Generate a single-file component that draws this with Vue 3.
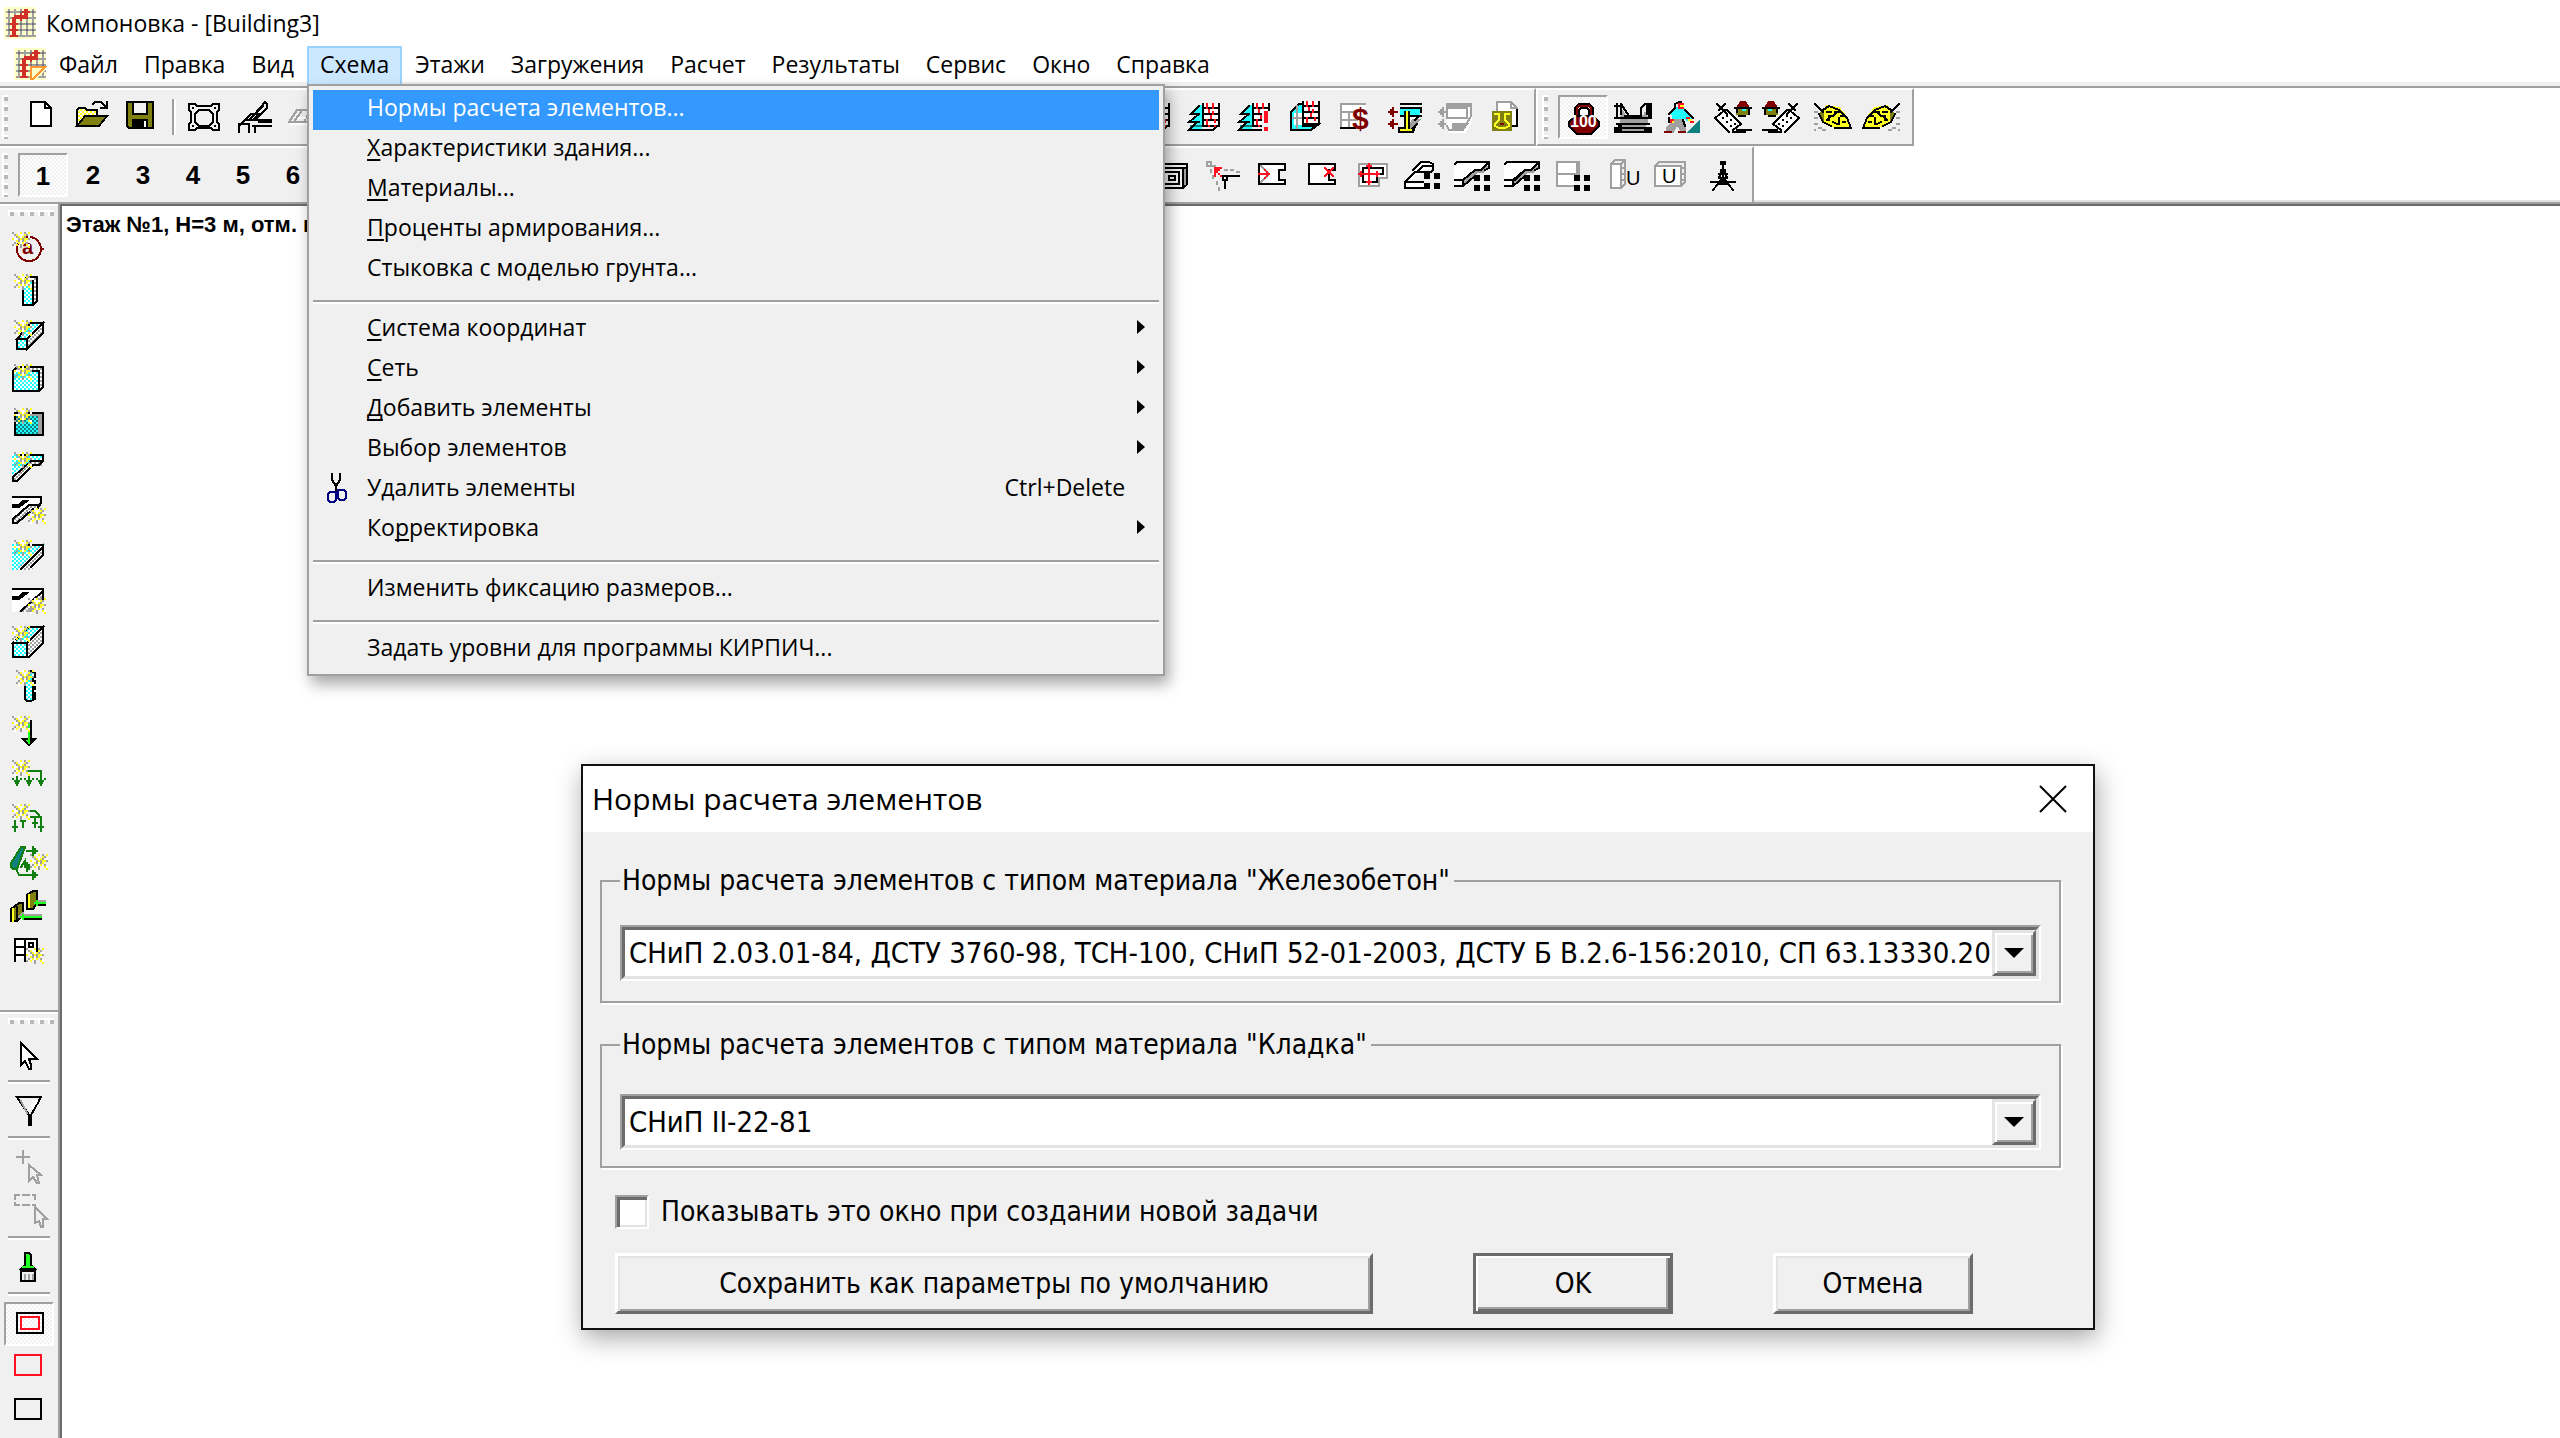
<script setup>
import { h } from 'vue'

const palette = {
  k: '#000000', w: '#ffffff', g: '#a0a0a0', r: '#ff1020', R: '#800000', c: '#20ffff',
  t: '#108080', y: '#ffff20', o: '#808010', G: '#108010', l: '#20ff20', n: '#000080', f: '#f0f0f0',
  p: '#ffffc8', q: '#d03028', d: '#707078', a: '#ff9830',
  C: 'url(#chk-cyan)', A: 'url(#chk-gray)', T: 'url(#chk-teal)', Y: 'url(#chk-yellow)',
}

const spark = [
  'g..wy.g.y', '.gy.w.yg.', '..gywyg.w', 'ywwgygyyg', '..ygwgy..', '.g.ywy.g.', 'g.y.g..yw', '.w..g...y',
]

// Pixel rows -> shapes, one square per letter.
const dots = (rows, x, y) => {
  const by = {}
  rows.forEach((row, j) => [...row].forEach((ch, i) => {
    if (ch !== '.') by[ch] = (by[ch] || '') + `M${x + i},${y + j}h0`
  }))
  return Object.entries(by).map(([ch, d]) => [d, ch, ''])
}
const star = (x, y) => dots(spark, x, y)
const four = (x, y) => [[`M${x},${y}h2v2h-2z M${x + 5},${y}h2v2h-2z M${x},${y + 5}h2v2h-2z M${x + 5},${y + 5}h2v2h-2z`, 'k', 'k']]
const label = (text, x, y, size, color, weight = 700) => [{ text, x, y, size, color, weight }]

const grid = [
  ['M0,0H15V15H0z', 'p', 'p'],
  ['M2,1V14M5,1V14M8,1V14M11,1V14M14,1V14M1,2H15M1,5H15M1,8H15M1,11H15M1,14H15', 'g', ''],
  ['M2,2h0M8,2h0M14,2h0M2,8h0M8,8h0M11,8h0M14,8h0M2,11h0M8,11h0M11,11h0M14,11h0', 'd', ''],
  ['M4,5h1v9h-1zM5,4h6v1h-6zM10,1h1v4h-1zM3,8h3M3,11h3M9,2h3M8,3v3M3,14h3', 'q', 'q'],
]
const tower = [
  ['M6,2L2,6H6L1,10H6L2,13H7V2z', 'c', 'c'],
  ['M2,12H13', 't', ''],
  ['M6,2L2,6H6M6,6L1,10H6M5,10L1,14H13L16,11', 'k', ''],
  ['M9,1h6v10h-6z', 'w', 'w'],
  ['M8,1V12M16,1V12M8,3H16M8,6H16M8,9H16M8,12H16', 'k', ''],
  ['M10,1V3M13,1V3M11,4V5M13,5V6M12,7V8M10,9V11M14,9V10M11,12h0M14,12h0', 'r', ''],
]
const slab = (y) => [
  [`M0,${y}H16L12,${y + 4}H9L2,${y + 11}H-1V${y + 1}z`, 'w', 'w'],
  [`M16,${y + 2}L13,${y + 5}H10L4,${y + 11}V${y + 9}L9,${y + 4}H13z`, 'g', 'g'],
  [`M-1,${y + 1}L0,${y}H16V${y + 3}L14,${y + 4}M15,${y + 1}L12,${y + 4}H9L3,${y + 9}H-1M-1,${y + 12}H3L9,${y + 7}M3,${y + 9}V${y + 12}`, 'k', ''],
]
const brick = [
  ['M0,8L5,5L11,10L6,14z', 'w', 'w'],
  ['M-1,8L4,4M-1,8L6,15M12,11L8,14M5,4L12,11M0,1L5,6M4,1L1,4', 'k', ''],
  ['M3,8h0M5,7h0M5,10h0M7,9h0M7,12h0M9,11h0', 'k', ''],
  ['M10,3L12,0H14L16,3z', 'R', 'R'],
  ['M10,4H15V6H10z', 'o', 'o'],
  ['M9,3H17M10,4V5M16,4V6M14,7H11M8,15H14M10,14H17', 'k', ''],
  ['M13,4h1', 'c', 'c'],
]
const leaf = [
  ['M2,6L5,2L11,3L15,8L16,12H8L3,9z', 'y', 'y'],
  ['M1,6L3,9V5z', 'o', 'o'],
  ['M-1,1L3,5M1,6L3,10L7,12M9,13H17L15,8L11,4L6,2L3,4M5,5h2M8,7l2,-2M5,9l2,-2M8,10l2,1M11,8v3M9,5h2M12,7h1M6,7v2M13,10h1', 'k', ''],
  ['M-1,5h1M-1,8h1M-1,11h1M1,13h1M3,14h1M-1,14h0', 'g', ''],
]

const icons = {
  grid,
  gridDoc: [...grid, ['M9,9H15V10L10,15H9z', 'p', 'p'], ['M8,15V9H15L9,15', 'a', '']],
  fresh: [['M2,0H9L12,3V12H2z', 'k', 'w'], ['M9,0V3H12', 'k', '']],
  open: [
    ['M0,4L1,3H4L5,4H10V11H0z', 'k', 'Y'], ['M0,12L4,7H15L11,12z', 'k', 'o'],
    ['M8,1L9,0H12L14,2M15,0V3H12', 'k', ''],
  ],
  save: [['M0,0H13V13H1L0,12z', 'k', 'o'], ['M3,0H10V6H3z', 'k', 'f'], ['M3,9H10V13H3z', 'k', 'k'], ['M9,10V12', 'w', '']],
  fit: [
    ['M0,1H3L4,2H11L12,1H15V4L14,5V10L15,11V14H12L11,13H4L3,14H0V11L1,10V5L0,4z', 'k', 'f'],
    ['M5,4H10L12,6V10L10,12H5L3,10V6z', 'k', 'f'], ['M2,3h0M13,3h0M2,12h0M13,12h0', 'k', ''],
  ],
  pen: [
    ['M0,12L6,6H10L7,9H3M7,7L13,0L14,1V3L9,8M5,9L12,2M0,13V15M5,12V15M8,13V15M0,11H5M7,9H16M7,12H16M10,10H16', 'k', ''],
  ],
  gray: [['M0,10L4,4H13L16,10H0M3,9L6,5M8,9L10,5', 'g', ''], ['M1,11H16M5,8H8', 'w', '']],
  tower,
  towerAlert: [...tower, ['M13,5h4v10h-4z', 'f', 'f'], ['M14,5h1v5h-1zM14,13h1v1h-1z', 'r', 'r']],
  towerWall: [
    ['M2,5L6,1H8V12H14L12,14H2z', 'k', 'c'], ['M4,6h3v5h-3z', 'w', 'w'], ['M5,2V13M3,8h4', 'g', ''],
    ['M9,0h6v10h-6z', 'w', 'w'],
    ['M8,0V11M16,0V11M8,2H16M8,5H16M8,8H16M8,11H16L12,14H2', 'k', ''],
    ['M10,0V2M13,0V2M11,3V4M13,4V5M12,6V7M10,8V10M14,8V9', 'r', ''],
  ],
  price: [
    ['M2,2H14V13H2z', 'w', 'w'], ['M2,13V1H14M2,5H10M2,9H10M6,5V12', 'g', ''], ['M2,13H9', 'k', ''],
    ...label('$', 8, 14, 15, 'R'),
  ],
  beams: [
    ['M1,5H5M3,3V7M2,4V6M1,11H5M3,9V13M2,10V12', 'R', ''],
    ['M7,4H16V6H7z', 'c', 'c'], ['M13,9H16L13,13H10z', 'g', 'g'],
    ['M7,1H17M7,3H17M7,7H17M17,3V5M16,7L14,9M15,11L12,14M6,13V15H13L14,12', 'k', ''],
    ['M10,5V13M7,14H12', 'y', ''], ['M9,5V13M11,5V13M7,13h2', 'k', ''],
  ],
  beamsOff: [
    ['M5,2H17V10L14,15H6z', 'w', 'w'],
    ['M1,5H4M3,3V7M2,4V6M1,11H4M3,9V13M2,10V12M5,1H17V7L13,14H6L5,12M5,1V3H15V8H5z', 'g', ''],
    ['M8,11H15L12,14H8zM5,1H17V2H5z', 'g', 'g'],
  ],
  report: [
    ['M5,0H12L15,3V12H5z', 'g', 'w'], ['M12,0V3H15', 'g', ''], ['M15,4V12H13', 'k', ''],
    ['M3,5H12V14H3z', 'o', 'o'], ['M4,6H6V9L4,11V12L6,13H9L11,12V11L9,9V6H11', 'y', ''], ['M7,11h1', 'R', ''],
  ],
  weight: [
    ['M4,8V3L6,1H11L13,3V8', 'k', ''], ['M5,8V3L6,2H11L12,3V8', 'R', ''], ['M6,8V4L7,3H10L11,4V8', 'k', 'w'],
    ['M4,7H13L16,10V12L12,16H5L1,12V10z', 'k', 'R'],
    ...label('100', 2, 13, 8, 'w'),
  ],
  press: [
    ['M3,5L2,8V11H15V8L14,5V7H4z', 'g', 'g'],
    ['M-1,2H2V6M0,1V7M2,1L6,7M12,7V3L14,1H17V7M15,2V6M16,2V7M12,7H4M-1,8H17M0,11H16M-1,13H17M-1,15H17M-1,14H2M14,14H17M1,12H4', 'k', ''],
    ['M2,9H13M3,12H14M3,14H13', 'g', ''],
  ],
  worker: [
    ['M2,5L5,3H8L12,8L10,9L8,7V9H3V7z', 'c', 'c'], ['M4,9H8L9,14H7L5,11L3,15H0V13z', 'g', 'g'],
    ['M4,2V1L6,0H7M1,6L4,3M9,4L13,8M1,8V10M8,9L9,12', 'k', ''],
    ['M-1,15H2M6,15H9', 'R', ''], ['M6,1h2v2h-2zM2,9h1v1h-1zM10,8h1M12,10h1', 'r', 'r'], ['M7,2h1M11,9h1M3,10h0', 'y', ''],
    ['M11,15L16,10V15z', 't', 't'],
  ],
  brick,
  leaf,
  frames: [
    ['M0,4H13V14H0zM3,6H11V12H3zM6,8H9V10H6zM1,2H15V12L13,14M14,4V12', 'k', ''], ['M14,5V12', 'g', ''],
  ],
  node: [
    ['M0,1h2v2h-2zM3,3h1M6,4h1M9,5h1M12,5h1M15,6h1M2,5v1M3,8v1M5,11v1M6,14v1', 'g', ''],
    ['M4,8V4H7M4,5H6M5,6h0M6,7h0M7,8h0', 'r', ''], ['M8,8h2v2h-2zM10,8H16M9,10V14', 'k', ''],
  ],
  joinIn: [['M1,2H14V5H11V10H14V12H1z', 'k', 'w'], ['M2,3L6,7L2,11', 'g', ''], ['M1,7H6M5,6V8M4,5h0M4,9h0', 'r', '']],
  joinOut: [['M1,2H14V5H11V10H14V12H1z', 'k', 'w'], ['M9,4L13,8M13,4L9,8', 'r', '']],
  joinMove: [
    ['M1,2H15V9H11V13H1z', 'g', 'w'], ['M3,4H13V7H10V11H3z', 'k', 'w'],
    ['M6,2V12M1,7H11M5,3H7M5,11H7M2,6V8M10,6V8', 'r', ''],
  ],
  levelA: [
    ['M-1,12L5,4L8,1H12V4H9L6,7H4L1,11H8V13H-1z', 'w', 'w'],
    ['M8,11H-1M-1,11L4,6H12L13,5V2L11,1H7L3,5M-1,14H8M-1,11V14M5,6L8,3H12', 'k', ''], ...four(9, 7),
  ],
  levelB: [...slab(1), ['M9,8h8v8h-8z', 'f', 'f'], ...four(9, 8)],
  levelC: [...slab(1), ['M4,10L9,5', 'k', ''], ...four(9, 8)],
  levelD: [['M0,1H11V13H0z', 'g', 'w'], ['M0,7H10M10,2V7', 'g', ''], ['M9,8h8v8h-8z', 'f', 'f'], ...four(9, 8)],
  bookU: [
    ['M2,2H7V14H2z', 'g', 'w'], ['M2,2L4,0H9V12L7,14M7,2L9,0M8,4h1M8,7h1M8,10h1', 'g', ''],
    ...label('U', 10, 13, 10, 'k', 400),
  ],
  pageU: [
    ['M-1,3H12V13H-1z', 'g', 'w'], ['M-1,3L1,1H14V11L12,13M13,4h1M13,7h1M13,10h1', 'g', ''],
    ...label('U', 3, 12, 10, 'k', 400),
  ],
  mast: [
    ['M7,1h2M7,2h2M8,3V8M7,5h2M6,7h4M6,9L7,6M10,9L9,6M6,9h4M2,11H14M7,10L3,15M9,10L13,15M8,10V12M6,12h4', 'k', ''],
  ],
  axis: [['M8,2A6,6 0 1 1 7.9,2zM14,8H15', 'R', ''], ...label('a', 5, 11, 10, 'R'), ...star(0, 0)],
  column: [['M5,2L7,0H12V12L10,14H5z', 'k', 'A'], ['M5,2H10V14H5z', 'k', 'C'], ...star(1, -1)],
  beam: [
    ['M2,9L9,1H15L7,9z', 'k', 'C'], ['M7,9L15,1V6L7,14z', 'k', 'A'], ['M2,9H7V14H2z', 'k', 'C'], ...star(1, 0),
  ],
  wall: [['M0,3L2,1H15V11L13,13H0z', 'k', 'A'], ['M0,3H13V13H0z', 'k', 'C'], ...star(1, 0)],
  plate: [['M1,2H15V13H1z', 'k', 'g'], ['M2,4H12V12H2z', 'T', 'T'], ...star(1, 0)],
  ledge: [
    ['M0,1H15L13,5H8L0,12z', 'C', 'C'], ['M0,12L8,5H14V6H10L2,14z', 'A', 'A'],
    ['M3,1H15V4L13,6H10L2,14H0V12L9,4H15', 'k', ''], ...star(1, 0),
  ],
  ledgePart: [
    ['M0,0H14L10,5L0,12z', 'w', 'w'], ['M0,12L8,4H13L2,13z', 'A', 'A'],
    ['M0,0H14M0,5H3L7,2H5L3,4H0M13,4H8L0,11V13H2L10,6H12L14,3V1', 'k', ''], ...star(8, 6),
  ],
  roof: [
    ['M0,2H15L3,14H0z', 'C', 'C'], ['M15,2V7L9,14H3z', 'A', 'A'], ['M3,2H15V7L9,13M15,3L4,14', 'k', ''], ...star(1, 0),
  ],
  roofPart: [
    ['M0,2H15L3,13H0z', 'w', 'w'], ['M15,3V7L9,13H4z', 'A', 'A'],
    ['M0,2H15V7M15,3L4,13M0,7H3L7,4H5L3,6H0', 'k', ''], ...star(8, 7),
  ],
  block: [
    ['M0,7L8,-1H15L7,7z', 'k', 'C'], ['M7,7L15,-1V7L8,14H7z', 'k', 'A'], ['M0,7H7V14H0z', 'k', 'C'], ...star(0, -1),
  ],
  pile: [
    ['M6,5V13L7,14H9L11,13V0L9,-1', 'k', 'C'], ['M10,2V13M11,1h0', 'k', ''], ['M11,3h0M11,6h0M11,9h0', 'w', ''], ...star(2, -1),
  ],
  force: [['M9,2V13M5,11H11L8,14z', 'k', 'l'], ['M8,2V13', 'l', ''], ...star(0, 0)],
  load: [
    ['M8,9V5H14V10M2,8V11M0,9h0M4,9h0M6,9h0M10,9h0M12,9h0M16,9h0', 'G', ''],
    ['M1,10H3L2,12zM7,10H9L8,12zM13,10H15L14,12z', 'G', 'G'], ...star(0, 0),
  ],
  trap: [
    ['M8,3H11L13,5L14,7V13M8,6H11V11M9,6H14M1,8V13M5,8V11M0,11H2M4,8H6M10,9H12M13,11H15', 'G', ''], ...star(0, 0),
  ],
  wind: [
    ['M4,-1H6L2,10H0L-1,9V7z', 'G', 't'], ['M7,1H12M10,-1V3M11,0V2M4,9L6,6V9H9M7,7V11M8,8V10M2,11L3,13H12M10,11V15M11,12V14', 'G', ''], ...star(9, 3),
  ],
  soil: [
    ['M-1,8L3,5H5V11L2,14H-1z', 'k', 'o'], ['M0,8V14', 'y', ''], ['M2,7V14', 'k', ''],
    ['M7,1L10,-1H12V5L10,8H7z', 'k', 'o'], ['M8,1V7', 'y', ''],
    ['M12,4H16M4,11H14M3,12L5,10', 'g', ''], ['M12,6H16M5,13H14', 'k', ''],
    ['M11,5H16M12,4V6M4,12H14M5,11V13', 'l', ''],
  ],
  frame: [['M1,12V1H12V8M6,1V12M1,5H6M1,9H6M8,3H10V5H8z', 'k', 'w'], ...star(7, 6)],
  cursor: [['M4,1V12L6,10L8,14H9V12L8,9H12z', 'k', 'w']],
  funnel: [['M2,0H14L9,9V14H8V9z', 'k', 'f'], ['M10,2H12L9,7z', 'w', 'w'], ['M4,2L7,8', 'g', '']],
  cursorAdd: [['M8,6V14L10,12L12,15H13L12,11H14z', 'g', 'f'], ['M5,-1V5M2,2H8', 'g', '']],
  cursorBox: [['M11,5V13L13,12L14,15H15V11H17z', 'g', 'f'], ['M1,-1H3M5,-1H8M10,-1H11V1M1,-1V1M1,3V4H3M5,4H8M10,4H11', 'g', '']],
  brush: [
    ['M6,0H8L9,1V6L11,8H4L6,6z', 'k', 'l'], ['M5,7H10', 'l', ''], ['M4,8H11V14H4z', 'k', 'f'], ['M4,9H11', 'k', ''], ['M6,11V13M8,11V13M10,11V13', 'g', ''],
  ],
  both: [['M2,2H15V12H2z', 'k', ''], ['M4,4H13V10H4z', 'r', '']],
  red: [['M1,1H14V11H1z', 'r', '']],
  black: [['M1,1H14V11H1z', 'k', '']],
  cut: [['M5,0V3L7,6V9M9,0V3L7,6', 'k', ''], ['M6,9H4L3,10V13L4,14H6L7,13V9M8,8H11L12,9V12L11,13H9L8,12V8', 'n', '']],
}

const Pix = ({ name, flip }) => h('svg', { class: ['pix', flip && 'flip'], viewBox: '0 0 16 16', 'aria-hidden': 'true' },
  icons[name].map((s) => Array.isArray(s)
    ? h('path', { d: s[0], transform: 'translate(.5 .5)', stroke: palette[s[1]] || 'none', fill: palette[s[2]] || 'none' })
    : h('text', { x: s.x, y: s.y, 'font-size': s.size, 'font-weight': s.weight, fill: palette[s.color] }, s.text)))
Pix.props = ['name', 'flip']

const menus = ['Файл', 'Правка', 'Вид', 'Схема', 'Этажи', 'Загружения', 'Расчет', 'Результаты', 'Сервис', 'Окно', 'Справка']
const entries = [
  { key: '', rest: 'Нормы расчета элементов...', active: true },
  { key: 'Х', rest: 'арактеристики здания...' },
  { key: 'М', rest: 'атериалы...' },
  { key: 'П', rest: 'роценты армирования...' },
  { key: '', rest: 'Стыковка с моделью грунта...' },
  null,
  { key: 'С', rest: 'истема координат', sub: true },
  { key: 'С', rest: 'еть', sub: true },
  { key: 'Д', rest: 'обавить элементы', sub: true },
  { key: '', rest: 'Выбор элементов', sub: true },
  { key: '', rest: 'Удалить элементы', icon: 'cut', hint: 'Ctrl+Delete' },
  { pre: 'Ко', key: 'р', rest: 'ректировка', sub: true },
  null,
  { key: '', rest: 'Изменить фиксацию размеров...' },
  null,
  { key: '', rest: 'Задать уровни для программы КИРПИЧ...' },
]
const fileTools = ['fresh', 'open', 'save']
const viewTools = ['fit', 'pen', 'gray']
const resultTools = ['tower', 'tower', 'towerAlert', 'towerWall', 'price', 'beams', 'beamsOff', 'report']
const loadTools = [['weight'], ['press'], ['worker'], ['brick'], ['brick', true], ['leaf'], ['leaf', true]]
const editTools = ['frames', 'node', 'joinIn', 'joinOut', 'joinMove', 'levelA', 'levelB', 'levelC', 'levelD', 'bookU', 'pageU', 'mast']
const addTools = ['axis', 'column', 'beam', 'wall', 'plate', 'ledge', 'ledgePart', 'roof', 'roofPart', 'block', 'pile', 'force', 'load', 'trap', 'wind', 'soil', 'frame']
const pickTools = ['cursor', '', 'funnel', '', 'cursorAdd', 'cursorBox', '', 'brush', '', 'both', 'red', 'black']
</script>

<template>
  <div class="app">
    <svg class="defs" aria-hidden="true">
      <defs>
        <pattern v-for="[id, a, b] in [['chk-cyan', '#20ffff', '#fff'], ['chk-gray', '#a0a0a0', '#fff'], ['chk-teal', '#108080', '#20ffff'], ['chk-yellow', '#ffff20', '#fff']]"
          :id="id" :key="id" width="2" height="2" patternUnits="userSpaceOnUse" patternTransform="translate(.5 .5)">
          <rect width="2" height="2" :fill="b" /><path d="M0,0h1v1h-1zM1,1h1v1h-1z" :fill="a" />
        </pattern>
      </defs>
    </svg>

    <header class="title"><Pix name="grid" /><span>Компоновка - [Building3]</span></header>

    <nav class="menubar">
      <Pix name="gridDoc" />
      <div v-for="m in menus" :key="m" class="slot">
        <button class="menu" :class="{ on: m === 'Схема' }">{{ m }}</button>
        <div v-if="m === 'Схема'" class="popup" role="menu">
          <template v-for="(e, i) in entries" :key="i">
            <hr v-if="!e" class="rule">
            <button v-else class="entry" :class="{ active: e.active }" role="menuitem">
              <span class="mark"><Pix v-if="e.icon" :name="e.icon" /></span>
              <span class="name">{{ e.pre }}<u v-if="e.key">{{ e.key }}</u>{{ e.rest }}</span>
              <span v-if="e.hint" class="hint">{{ e.hint }}</span>
              <i v-if="e.sub" class="more"></i>
            </button>
          </template>
        </div>
      </div>
    </nav>

    <div class="bars">
      <div class="bar">
        <div class="strip first">
          <i class="grip"></i>
          <button v-for="t in fileTools" :key="t" class="tool" :aria-label="t"><Pix :name="t" /></button>
          <i class="divider"></i>
          <button v-for="t in viewTools" :key="t" class="tool" :aria-label="t"><Pix :name="t" /></button>
          <i class="fill"></i>
          <button v-for="(t, i) in resultTools" :key="i" class="tool" :aria-label="t"><Pix :name="t" /></button>
        </div>
        <div class="strip">
          <i class="grip"></i>
          <button v-for="([t, f], i) in loadTools" :key="i" class="tool" :class="{ down: !i }" :aria-label="t"><Pix :name="t" :flip="f" /></button>
        </div>
      </div>
      <div class="bar second">
        <div class="strip">
          <i class="grip"></i>
          <button v-for="n in 6" :key="n" class="tool num" :class="{ down: n === 1 }">{{ n }}</button>
          <i class="fill wide"></i>
          <button v-for="t in editTools" :key="t" class="tool" :aria-label="t"><Pix :name="t" /></button>
        </div>
      </div>
    </div>

    <div class="work">
      <aside class="side">
        <i class="grip flat"></i>
        <button v-for="t in addTools" :key="t" class="tool" :aria-label="t"><Pix :name="t" /></button>
        <hr class="full">
        <i class="grip flat"></i>
        <template v-for="(t, i) in pickTools" :key="i">
          <button v-if="t" class="tool" :class="{ down: t === 'both' }" :aria-label="t"><Pix :name="t" /></button>
          <hr v-else class="short">
        </template>
      </aside>
      <main class="canvas">
        <p class="floor">Этаж №1, H=3 м, отм. в</p>

        <form class="dialog" role="dialog" aria-labelledby="dlg" @submit.prevent>
          <div class="head">
            <h1 id="dlg">Нормы расчета элементов</h1>
            <button type="button" class="close" aria-label="Закрыть">
              <svg viewBox="0 0 28 28"><path d="M1,1L27,27M27,1L1,27" stroke="#000" stroke-width="2" fill="none" /></svg>
            </button>
          </div>
          <div class="body">
            <fieldset>
              <legend><label for="rc">Нормы расчета элементов с типом материала "Железобетон"</label></legend>
              <div class="combo">
                <select id="rc"><option>СНиП 2.03.01-84, ДСТУ 3760-98, ТСН-100, СНиП 52-01-2003, ДСТУ Б В.2.6-156:2010, СП 63.13330.20</option></select>
                <i class="drop"></i>
              </div>
            </fieldset>
            <fieldset class="loose">
              <legend><label for="ms">Нормы расчета элементов с типом материала "Кладка"</label></legend>
              <div class="combo">
                <select id="ms"><option>СНиП II-22-81</option></select>
                <i class="drop"></i>
              </div>
            </fieldset>
            <label class="check"><input type="checkbox">Показывать это окно при создании новой задачи</label>
            <div class="actions">
              <button type="button" class="push wide">Сохранить как параметры по умолчанию</button>
              <button type="submit" class="push main">OK</button>
              <button type="button" class="push">Отмена</button>
            </div>
          </div>
        </form>
      </main>
    </div>
  </div>
</template>

<style>
body { margin: 0; background: #fff; overflow: hidden; }
.pix { width: 32px; height: 32px; overflow: visible; display: block; flex: none; }
.pix path { shape-rendering: crispEdges; stroke-width: 1; stroke-linecap: square; }
.pix text { font-family: "Liberation Sans", Arial, sans-serif; }
.pix.flip { transform: scaleX(-1); }
</style>

<style scoped>
.app { display: flex; flex-direction: column; min-height: 100vh; color: #000; font: 23px/32px "Open Sans", "Noto Sans", sans-serif; }
.app * { box-sizing: border-box; }
.defs { position: absolute; width: 0; height: 0; }
button { font: inherit; color: inherit; border: 0; background: none; padding: 0; margin: 0; }

.title { display: flex; align-items: center; gap: 10px; height: 46px; padding: 0 4px; }
.menubar { display: flex; align-items: center; height: 36px; padding-left: 14px; }
.slot { position: relative; }
.menu { height: 36px; padding: 0 13px; display: block; }
.menu.on { background: #cce8ff; border: 2px solid #99d1ff; border-bottom: 0; padding: 0 11px 4px; height: 38px; margin-bottom: -2px; }

.popup { position: absolute; z-index: 5; left: 0; top: 38px; width: 858px; padding: 4px; background: #f0f0f0; border: 2px solid #a0a0a0; box-shadow: 4px 8px 14px rgba(0, 0, 0, .35); }
.entry { display: flex; align-items: center; width: 100%; height: 40px; padding-bottom: 6px; text-align: left; }
.entry.active { background: #3399ff; color: #fff; }
.mark { width: 54px; padding: 4px 0 0 8px; }
.name { flex: 1; }
.name u { text-underline-offset: 3px; text-decoration-thickness: 2px; text-decoration-skip-ink: none; }
.hint { margin-right: 34px; }
.more { margin-right: 14px; border: 7px solid transparent; border-left: 8px solid #000; border-right: 0; }
.rule { height: 4px; margin: 10px 0 6px; border: 0; border-top: 2px solid #a0a0a0; background: #fff; }

.bars { border-top: 4px solid #f0f0f0; }
.bar { display: flex; height: 60px; border-top: 2px solid #a0a0a0; }
.second { border: 0; border-bottom: 2px solid #6b6b6b; box-shadow: inset 0 -2px #a0a0a0, inset 0 -4px #e3e3e3; }
.strip { display: flex; align-items: center; padding: 0 4px 0 2px; background: #f0f0f0; border-right: 2px solid #a0a0a0; border-top: 2px solid #fff; border-bottom: 2px solid #a0a0a0; }
.strip + .strip { border-left: 2px solid #fff; padding-left: 4px; }
.first { padding-right: 6px; }
.grip { flex: none; width: 6px; height: 44px; margin-right: 10px; background: repeating-linear-gradient(#fff 0 2px, #b8b8b8 2px 6px, #f0f0f0 6px 10px); border-left: 2px solid #fff; }
.tool { flex: none; width: 50px; height: 44px; padding-left: 8px; display: flex; align-items: center; }
.num { padding: 0; justify-content: center; font: bold 26px/44px "Liberation Sans Narrow", "Liberation Sans", sans-serif; }
.tool.down { background: repeating-conic-gradient(#fff 0 25%, #f0f0f0 0 50%) 0 0 / 4px 4px; border: 2px solid; border-color: #a0a0a0 #fff #fff #a0a0a0; padding-left: 6px; }
.num.down { padding: 2px 0 0; }
.divider { width: 4px; height: 36px; margin: 0 4px; border-left: 2px solid #a0a0a0; background: #fff; }
.fill { width: 798px; }
.fill.wide { width: 830px; }

.work { flex: 1; display: flex; margin-top: -2px; }
.side { flex: none; width: 58px; background: #f0f0f0; border-top: 2px solid #fff; display: flex; flex-direction: column; }
.side .tool { margin-left: 4px; }
.grip.flat { width: 46px; height: 6px; margin: 4px 0 10px 8px; border: 0; border-top: 2px solid #fff; background: repeating-linear-gradient(90deg, #fff 0 2px, #b8b8b8 2px 6px, #f0f0f0 6px 10px); }
.full { width: 100%; height: 4px; margin: 36px 0 0; border: 0; border-top: 2px solid #a0a0a0; background: #fff; flex: none; }
.short { width: 42px; height: 4px; margin: 2px 8px 6px; border: 0; border-top: 2px solid #a0a0a0; background: #fff; flex: none; }
.canvas { flex: 1; position: relative; border-left: 2px solid #6b6b6b; box-shadow: -2px 0 #a0a0a0; margin-left: 2px; }
.floor { margin: 9px 4px; font: bold 22px/24px "Liberation Sans", Arial, sans-serif; }

.dialog { position: absolute; left: 519px; top: 560px; width: 1514px; border: 2px solid #111; background: #f0f0f0; box-shadow: 2px 8px 24px rgba(0, 0, 0, .35); font: 28px/36px "DejaVu Sans Condensed", sans-serif; }
.head { display: flex; align-items: center; justify-content: space-between; height: 66px; padding: 0 26px 0 9px; background: #fff; }
.head h1 { margin: 0; font: 30px/40px "Open Sans", "Noto Sans", sans-serif; }
.close { width: 28px; height: 28px; }
.close svg { display: block; }
.body { padding: 31px 32px 14px 17px; }
fieldset { margin: 0 0 24px; padding: 26px 18px 20px; border: 2px solid #a0a0a0; box-shadow: 2px 2px #fff; min-width: 0; }
fieldset.loose { padding: 31px 18px 16px; }
legend { padding: 0 4px 0 2px; }
.combo { position: relative; border: 2px solid; border-color: #a0a0a0 #fff #fff #a0a0a0; }
.combo select { display: block; width: 100%; height: 52px; padding: 0 46px 0 4px; appearance: none; border: 3px solid; border-color: #6b6b6b #e3e3e3 #e3e3e3 #6b6b6b; border-radius: 0; background: #fff; color: #000; font: inherit; font-size: 29px; }
.drop { position: absolute; right: 3px; top: 3px; width: 44px; height: 46px; background: #f0f0f0; border: 3px solid; border-color: #e3e3e3 #6b6b6b #6b6b6b #e3e3e3; box-shadow: inset 2px 2px #fff, inset -2px -2px #a0a0a0; pointer-events: none; }
.drop::after { content: ""; position: absolute; left: 9px; top: 15px; border: 10px solid transparent; border-top-color: #000; border-bottom: 0; }
.check { display: flex; align-items: center; gap: 12px; margin: 26px 0 23px 15px; }
.check input { appearance: none; width: 34px; height: 34px; margin: 0; background: #fff; border: 2px solid; border-color: #a0a0a0 #fff #fff #a0a0a0; box-shadow: inset 3px 3px #6b6b6b, inset -2px -2px #e3e3e3; }
.actions { display: flex; gap: 100px; padding-left: 15px; }
.push { width: 200px; height: 61px; border: 3px solid; border-color: #fff #6b6b6b #6b6b6b #fff; box-shadow: inset 2px 2px #e3e3e3, inset -2px -2px #a0a0a0; }
.push.wide { width: 758px; }
.push.main { border-color: #6b6b6b; box-shadow: inset 2px 2px #fff, inset -2px -2px #6b6b6b, inset -4px -4px #a0a0a0; }
</style>
